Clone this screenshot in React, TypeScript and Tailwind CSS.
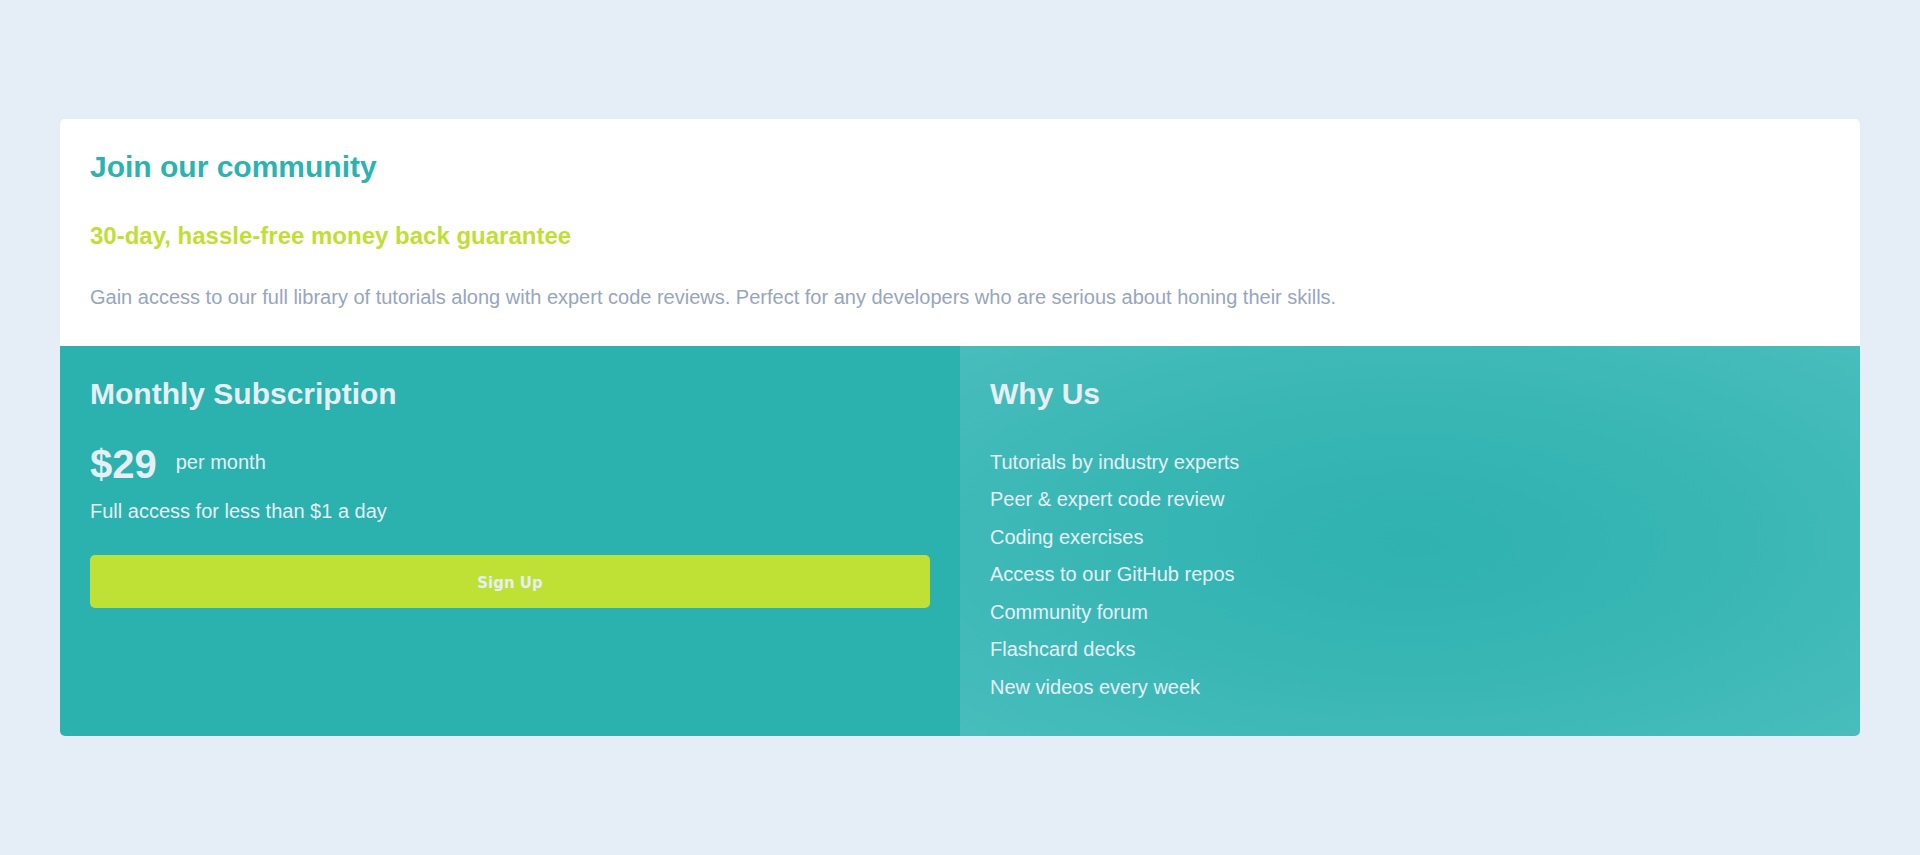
import React from "react";

const perks = [
  "Tutorials by industry experts",
  "Peer & expert code review",
  "Coding exercises",
  "Access to our GitHub repos",
  "Community forum",
  "Flashcard decks",
  "New videos every week",
];

export default function App() {
  return (
    <div className="min-h-screen flex items-center justify-center px-[60px] bg-[#e5eef6] font-['Liberation_Sans',Arial,sans-serif]">
      <div className="w-full rounded-[5px] overflow-hidden bg-white">
        {/* Top intro */}
        <div className="pt-[30px] pb-[34px] px-[30px]">
          <h1 className="text-[30px] leading-[36px] font-bold text-[#2bb3b1]">Join our community</h1>
          <h2 className="mt-[36px] text-[24px] leading-[29px] font-bold text-[#bfdf34]">
            30-day, hassle-free money back guarantee
          </h2>
          <p className="mt-[32px] text-[20px] leading-[30px] text-[#98a5c0]">
            Gain access to our full library of tutorials along with expert code reviews. Perfect for any developers who are serious about honing their skills.
          </p>
        </div>

        <div className="grid grid-cols-2 text-[#e6eff6]">
          {/* Subscription */}
          <div className="bg-[#2bb1ae] pt-[30px] px-[30px] pb-[30px]">
            <h2 className="text-[30px] leading-[36px] font-bold">Monthly Subscription</h2>
            <div className="mt-[28px] flex items-center gap-[19px]">
              <span className="text-[40px] leading-[48px] font-bold">$29</span>
              <span className="text-[20px] leading-[30px] mb-[4px]">per month</span>
            </div>
            <p className="mt-[8px] text-[20px] leading-[30px]">Full access for less than $1 a day</p>
            <button
              type="button"
              className="mt-[29px] w-full h-[53px] pt-[3px] rounded-[5px] bg-[#bfe034] text-[#e6eff6] text-[15px] font-bold font-['DejaVu_Sans',Verdana,sans-serif]"
            >
              Sign Up
            </button>
          </div>

          {/* Why us */}
          <div className="bg-[radial-gradient(ellipse_at_center,#2fb2b0_0%,#37b6b4_45%,#48bdbc_100%)] pt-[30px] px-[30px] pb-[30px]">
            <h2 className="text-[30px] leading-[36px] font-bold">Why Us</h2>
            <ul className="mt-[32px]">
              {perks.map((p) => (
                <li key={p} className="text-[20px] leading-[37.5px]">
                  {p}
                </li>
              ))}
            </ul>
          </div>
        </div>
      </div>
    </div>
  );
}
